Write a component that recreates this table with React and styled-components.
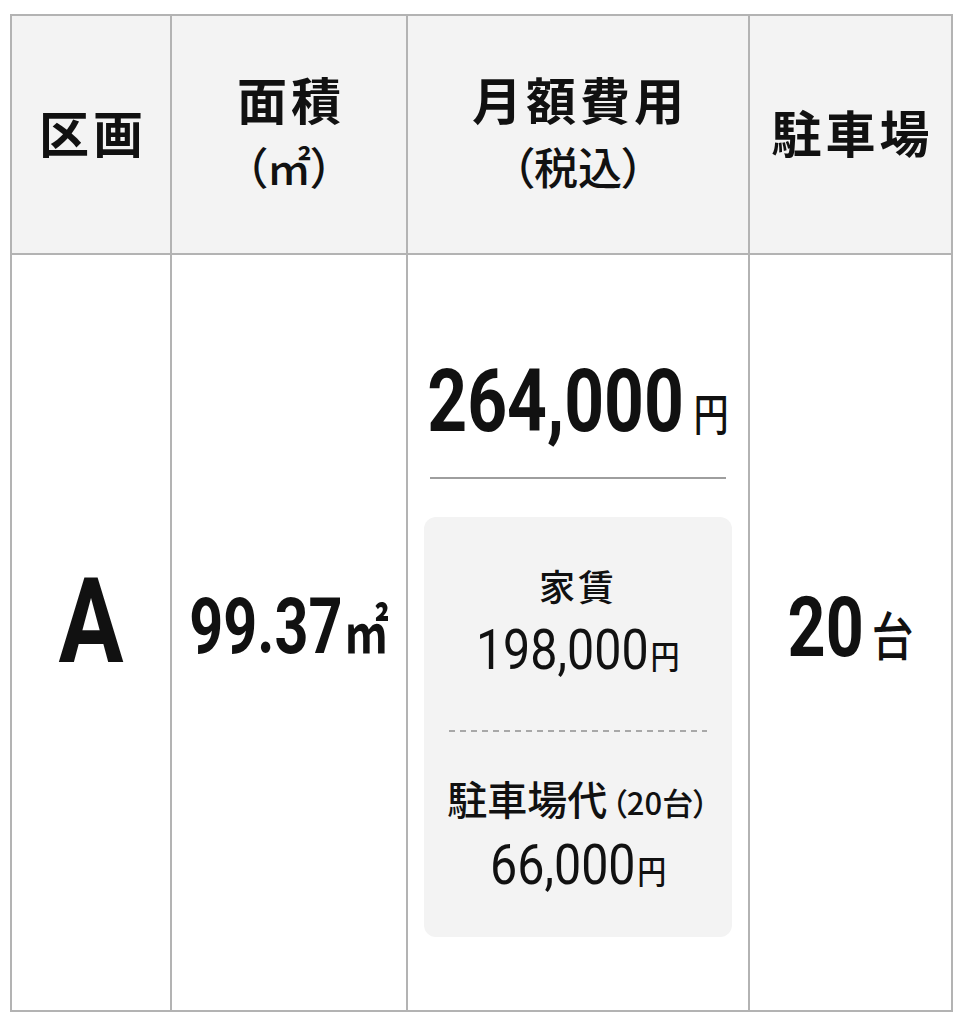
import React from 'react';
import styled, { createGlobalStyle } from 'styled-components';

const GlobalStyle = createGlobalStyle`
  html, body {
    margin: 0;
    padding: 0;
    background: #ffffff;
  }
  body {
    font-family: "Noto Sans CJK JP", "Noto Sans", sans-serif;
    color: #111111;
  }
`;

const NUM_FONT = `Roboto, "Liberation Sans", sans-serif`;
const JP_FONT = `"Noto Sans CJK JP", "Noto Sans", sans-serif`;

const Page = styled.div`
  padding: 14px 9px 13px 10px;
`;

const Table = styled.table`
  width: 941px;
  border-collapse: collapse;
  table-layout: fixed;
`;

const HeadCell = styled.th`
  width: ${props => props.$w}px;
  height: 229px;
  padding: 0 0 8px;
  background: #f3f3f3;
  border: 2px solid #b3b3b3;
  text-align: center;
  vertical-align: middle;
  font-family: ${JP_FONT};
  font-weight: 700;
`;

const HeadMain = styled.div`
  font-size: 50px;
  line-height: 70px;
  letter-spacing: 4px;
  padding-left: 4px;
`;

const HeadSub = styled.div`
  font-size: 44px;
  line-height: 66px;
  font-weight: 500;
  font-feature-settings: "palt";
`;

const BodyRow = styled.tr`
  height: 757px;
`;

const BodyCell = styled.td`
  padding: ${props => (props.$top ? '103px 16px 0' : `0 0 ${props.$lift || 10}px`)};
  border: 2px solid #b3b3b3;
  text-align: center;
  vertical-align: ${props => (props.$top ? 'top' : 'middle')};
  background: #ffffff;
`;

/* the figures in the design use a narrow DIN-like face; squeeze Roboto to match */
const Value = styled.div`
  font-family: ${NUM_FONT};
  font-weight: ${props => props.$weight || 700};
  font-size: ${props => props.$size}px;
  line-height: 1;
  white-space: nowrap;
  transform: scaleX(${props => props.$squeeze || 0.8});
  transform-origin: center;
  margin: 0 -40px;
`;

const Unit = styled.span`
  font-family: ${JP_FONT};
  font-weight: ${props => props.$weight || 500};
  font-size: ${props => props.$size}px;
  margin-left: ${props => props.$gap || 4}px;
  line-height: 1;
`;

const TotalRule = styled.div`
  height: 2px;
  margin: 32px 6px 38px;
  background: #9e9e9e;
`;

const Breakdown = styled.div`
  background: #f3f3f3;
  border-radius: 12px;
  padding: 50px 16px 44px;
  display: flex;
  flex-direction: column;
  align-items: center;
`;

const Label = styled.div`
  font-family: ${JP_FONT};
  font-weight: 500;
  font-size: ${props => props.$size}px;
  letter-spacing: ${props => props.$spacing || 0}px;
  line-height: 1;
  white-space: nowrap;
`;

const Note = styled.span`
  font-size: 31px;
  margin-left: 4px;
  font-feature-settings: "palt";
`;

const DashRule = styled.div`
  align-self: stretch;
  height: 2px;
  margin: 52px 9px 46px;
  background-image: repeating-linear-gradient(
    to right,
    #a8a8a8 0,
    #a8a8a8 6px,
    transparent 6px,
    transparent 11px
  );
`;

const Amount = styled(Value)`
  margin-top: ${props => props.$mt}px;
`;

export default function App() {
  return (
    <Page>
      <GlobalStyle />
      <Table>
        <thead>
          <tr>
            <HeadCell $w={158}>
              <HeadMain>区画</HeadMain>
            </HeadCell>
            <HeadCell $w={234}>
              <HeadMain>面積</HeadMain>
              <HeadSub>（㎡）</HeadSub>
            </HeadCell>
            <HeadCell $w={340}>
              <HeadMain>月額費用</HeadMain>
              <HeadSub>（税込）</HeadSub>
            </HeadCell>
            <HeadCell $w={201}>
              <HeadMain>駐車場</HeadMain>
            </HeadCell>
          </tr>
        </thead>
        <tbody>
          <BodyRow>
            <BodyCell $lift={22}>
              <Value $size={118} $squeeze={0.82}>A</Value>
            </BodyCell>
            <BodyCell>
              <Value $size={77} $squeeze={0.77}>
                99.37
                <Unit $size={58} $weight={700} $gap={2}>㎡</Unit>
              </Value>
            </BodyCell>
            <BodyCell $top>
              <Value $size={87} $squeeze={0.8}>
                264,000
                <Unit $size={44} $gap={12}>円</Unit>
              </Value>
              <TotalRule />
              <Breakdown>
                <Label $size={36} $spacing={3}>家賃</Label>
                <Amount $size={55} $weight={400} $squeeze={0.88} $mt={20}>
                  198,000
                  <Unit $size={33} $gap={2}>円</Unit>
                </Amount>
                <DashRule />
                <Label $size={40}>
                  駐車場代
                  <Note>（20台）</Note>
                </Label>
                <Amount $size={55} $weight={400} $squeeze={0.88} $mt={20}>
                  66,000
                  <Unit $size={33} $gap={2}>円</Unit>
                </Amount>
              </Breakdown>
            </BodyCell>
            <BodyCell>
              <Value $size={83} $squeeze={0.8}>
                20
                <Unit $size={52} $gap={10}>台</Unit>
              </Value>
            </BodyCell>
          </BodyRow>
        </tbody>
      </Table>
    </Page>
  );
}
